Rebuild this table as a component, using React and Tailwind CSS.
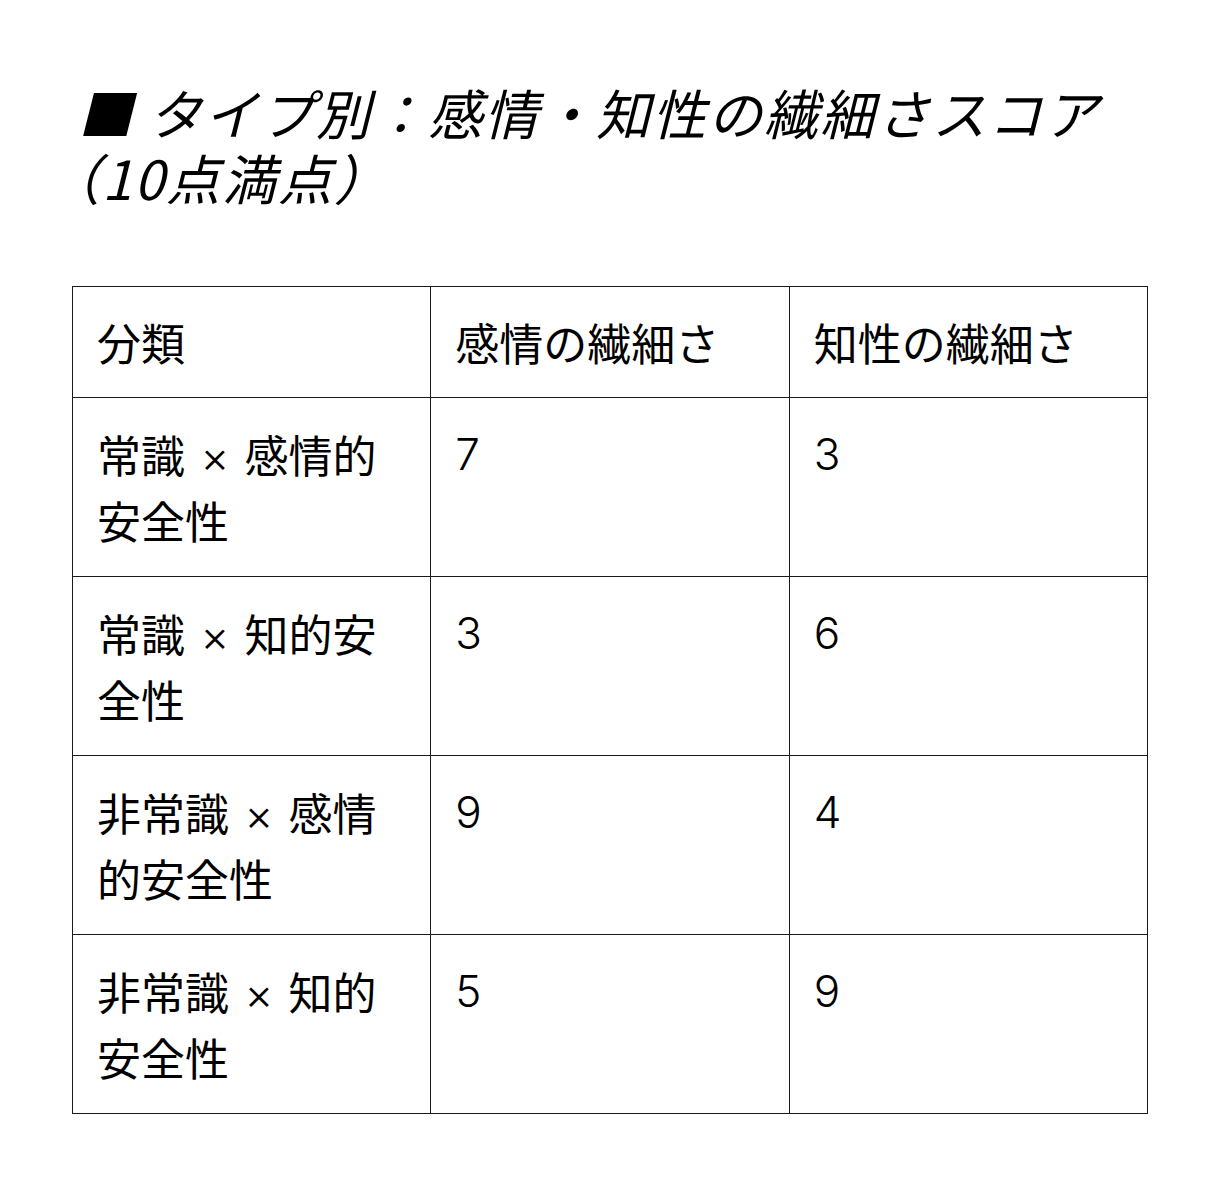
import React from 'react';

const rows = [
  { a: '常識', b: '感情的安全性', emotion: 7, intellect: 3 },
  { a: '常識', b: '知的安全性', emotion: 3, intellect: 6 },
  { a: '非常識', b: '感情的安全性', emotion: 9, intellect: 4 },
  { a: '非常識', b: '知的安全性', emotion: 5, intellect: 9 },
];

const Cell = ({ children, className = 'py-[23px]' }) => (
  <td
    className={`border border-[#1a1a1a] px-6 align-top text-[44px] leading-[66px] font-normal text-left ${className}`}
  >
    {children}
  </td>
);

const App = () => {
  return (
    <div className="min-h-screen bg-white text-black font-['Noto_Sans_CJK_JP','Noto_Sans',sans-serif]">
      <div className="px-[72px] pt-[79px] pb-[72px]">
        <h3 className="italic text-[54px] leading-[65px] font-normal tracking-[2px] pl-[6px]">
          ■ タイプ別：感情・知性の繊細さスコア
          <br />
          <span className="-ml-[32px]">（</span>10点満点）
        </h3>
        <table className="mt-[77px] w-full table-fixed border-collapse">
          <thead>
            <tr>
              <Cell className="py-[22px]">分類</Cell>
              <Cell className="py-[22px]">感情の繊細さ</Cell>
              <Cell className="py-[22px]">知性の繊細さ</Cell>
            </tr>
          </thead>
          <tbody>
            {rows.map((r) => (
              <tr key={r.a + r.b}>
                <Cell>
                  {r.a}
                  <span className="font-['Inter'] font-light leading-none px-[3px]"> × </span>
                  {r.b}
                </Cell>
                <Cell className="py-[23px] font-['Inter'] !font-light">{r.emotion}</Cell>
                <Cell className="py-[23px] font-['Inter'] !font-light">{r.intellect}</Cell>
              </tr>
            ))}
          </tbody>
        </table>
      </div>
    </div>
  );
};

export default App;
